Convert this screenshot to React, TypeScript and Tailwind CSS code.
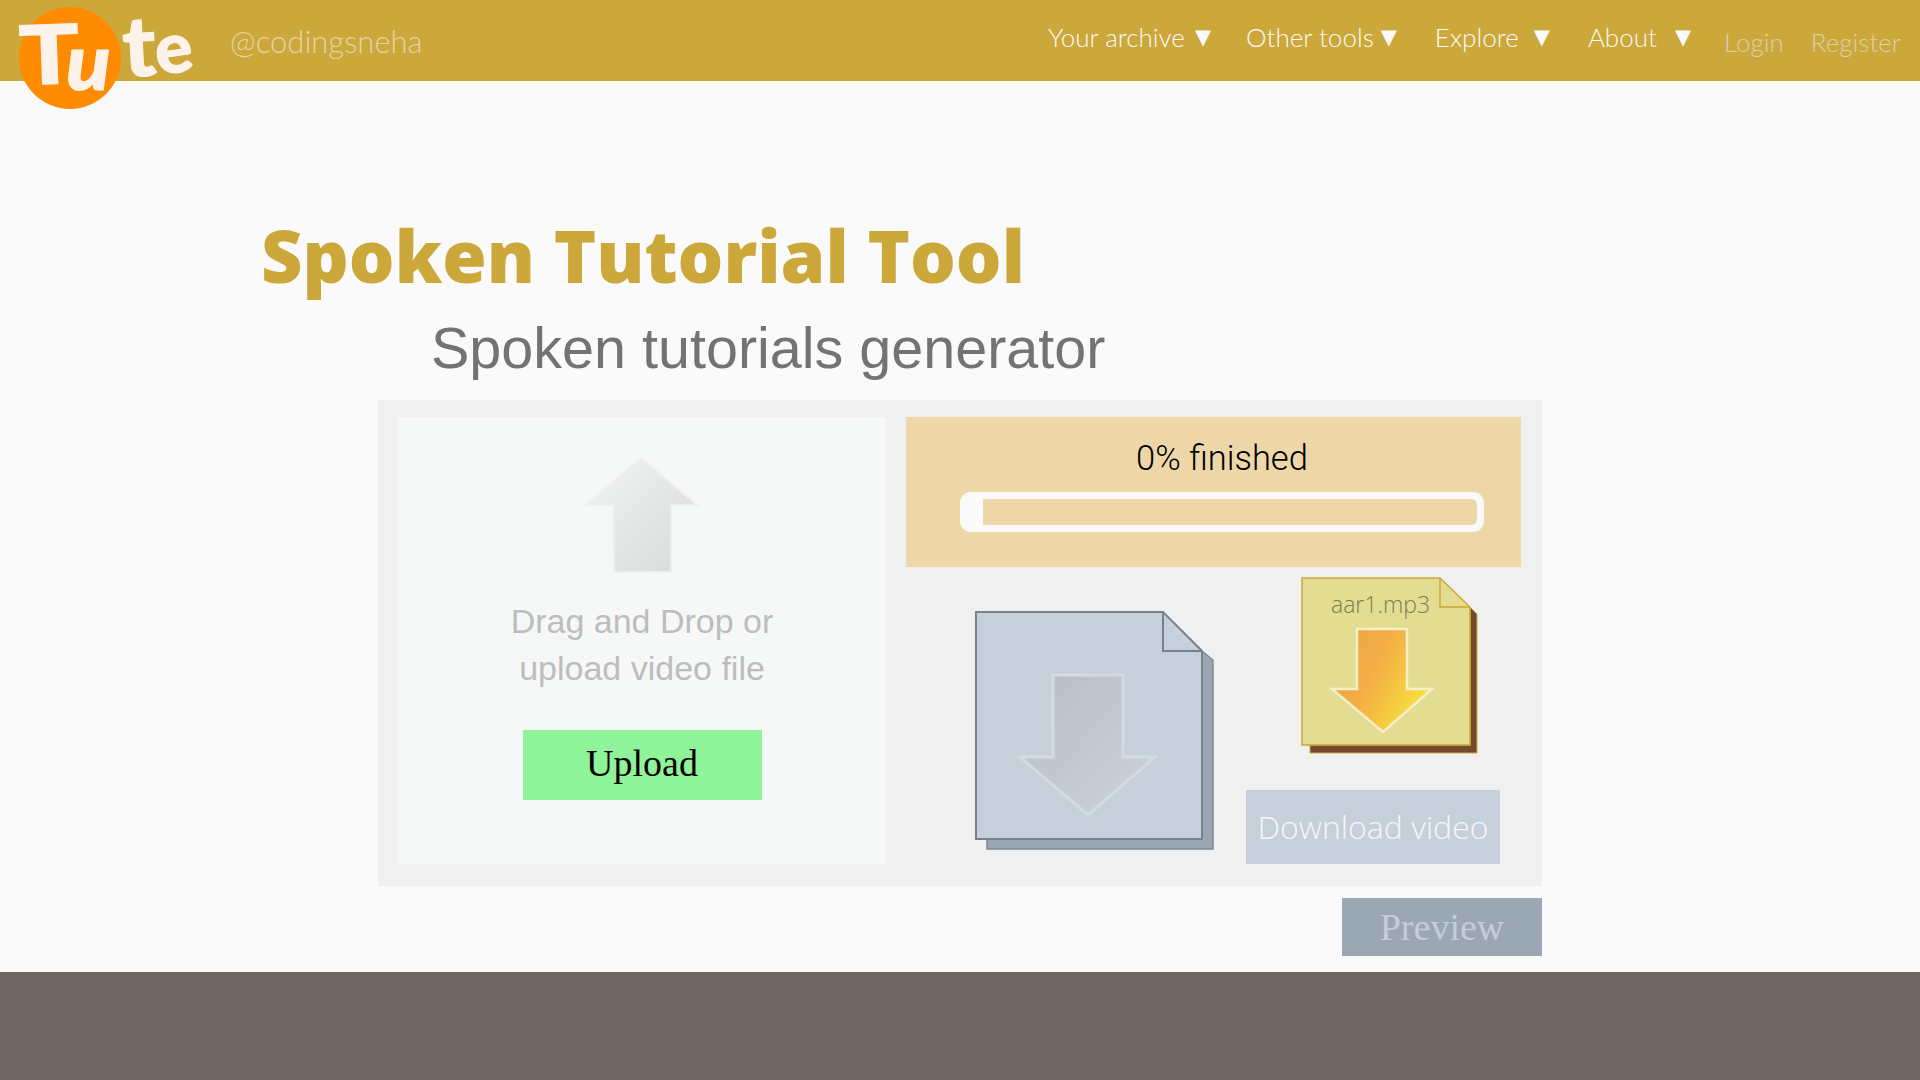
const navItems = [
  { label: "Your archive", cls: "ml-0", arrow: "ml-[10px]" },
  { label: "Other tools", cls: "ml-[35px]", arrow: "ml-[7px]" },
  { label: "Explore", cls: "ml-[38px]", arrow: "ml-[15px]" },
  { label: "About", cls: "ml-[38px]", arrow: "ml-[18px]" },
];

const Logo = () => (
  <svg width="210" height="120" viewBox="0 0 210 120" className="absolute left-0 top-0 overflow-visible">
    <circle cx="70" cy="58" r="51" fill="#ff8c00" />
    <g fill="#fdf3ea" stroke="#fdf3ea" strokeWidth="1" strokeLinejoin="round" fontFamily="Lato" fontWeight="900">
      <text x="0" y="0" fontSize="82" transform="translate(20 85) rotate(-2) scale(1.22 1)">T</text>
      <text x="0" y="0" fontSize="78" fontStyle="italic" transform="translate(66 90) scale(1.05 1)">u</text>
      <text x="0" y="0" fontSize="84" transform="translate(124 77) rotate(-3) scale(1.05 1)">t</text>
      <text x="0" y="0" fontSize="70" transform="translate(158 75) rotate(-8)">e</text>
    </g>
  </svg>
);

const UploadArrow = () => (
  <svg width="114" height="118" viewBox="0 0 114 118" className="block">
    <defs>
      <linearGradient id="upGrad" x1="0" y1="0" x2="1" y2="1">
        <stop offset="0" stopColor="#f2f3f3" />
        <stop offset="1" stopColor="#d8dada" />
      </linearGradient>
    </defs>
    <path d="M56 2 L112 49 H86 V116 H29 V49 H1 Z" fill="url(#upGrad)" stroke="#eeefef" strokeWidth="2" />
  </svg>
);

const BlueFile = () => (
  <svg width="240" height="240" viewBox="0 0 240 240" className="block">
    <defs>
      <linearGradient id="downGrad" x1="0" y1="0" x2="1" y2="1">
        <stop offset="0" stopColor="#b6bdc7" />
        <stop offset="1" stopColor="#ced3da" />
      </linearGradient>
    </defs>
    <path d="M227 40 L238 49 V238 H12 V228 H227 Z" fill="#9aa7b3" stroke="#7f8b95" strokeWidth="1.5" />
    <path d="M1 1 H188 L227 40 V228 H1 Z" fill="#c6d0da" stroke="#76838d" strokeWidth="2" />
    <path d="M188 1 V40 H227" fill="none" stroke="#76838d" strokeWidth="2" />
    <path d="M78 64 H148 V146 H180 L113 204 L45 146 H78 Z" fill="url(#downGrad)" stroke="#d3dbe2" strokeWidth="3" />
  </svg>
);

const YellowFile = () => (
  <svg width="178" height="178" viewBox="0 0 178 178" className="block">
    <defs>
      <linearGradient id="orangeGrad" x1="0" y1="0" x2="1" y2="0.5">
        <stop offset="0" stopColor="#e5a34a" />
        <stop offset="0.5" stopColor="#f4ae45" />
        <stop offset="1" stopColor="#f6e03c" />
      </linearGradient>
    </defs>
    <path d="M169 30 L176 37 V176 H9 V168 H169 Z" fill="#754a2c" stroke="#c9a74f" strokeWidth="1" />
    <path d="M1 1 H139 L169 30 V168 H1 Z" fill="#e3dd91" stroke="#cca739" strokeWidth="1.5" />
    <path d="M139 1 V30 H169" fill="none" stroke="#cca739" strokeWidth="1.5" />
    <path d="M56 52 H106 V112 H131 L82 155 L31 112 H56 Z" fill="url(#orangeGrad)" stroke="#f6efc9" strokeWidth="2.5" />
  </svg>
);

export default function App() {
  return (
    <div className="relative flex h-screen w-full flex-col overflow-hidden bg-[#fafafa]">
      {/* Header */}
      <header className="flex h-[81px] shrink-0 bg-[#cca739] pl-[230px] pr-[19px]">
        <span className="mt-[20px] font-['Lato',sans-serif] text-[31px] leading-[42px] font-light text-[#e6d3ab]">@codingsneha</span>
        <nav className="ml-auto flex">
          {navItems.map((item) => (
            <div key={item.label} className={`flex h-[75px] items-center ${item.cls}`}>
              <span className="font-['Lato',sans-serif] text-[26px] font-light text-[#fafafa]">{item.label}</span>
              <span className={`font-['DejaVu_Sans',sans-serif] text-[21px] text-[#fafafa] ${item.arrow}`}>▼</span>
            </div>
          ))}
          <div className="ml-[33px] flex h-[85px] items-center gap-[27px] font-['Lato',sans-serif] text-[26px] font-light text-[#dccfae]">
            <span>Login</span>
            <span>Register</span>
          </div>
        </nav>
      </header>
      <Logo />

      {/* Main */}
      <main className="flex-1 pl-[261px]">
        <h1 className="mt-[124px] font-['Open_Sans',sans-serif] text-[72px] leading-[100px] font-extrabold text-[#cca739]">Spoken Tutorial Tool</h1>
        <h2 className="mt-[12px] ml-[170px] font-['Liberation_Sans',sans-serif] text-[57.5px] leading-[62px] text-[#737373]">Spoken tutorials generator</h2>

        <div className="mt-[21px] ml-[117px] flex h-[486px] w-[1164px] bg-[#f0f0f0] pt-[17px] pl-[20px]">
          {/* Upload panel */}
          <div className="flex h-[447px] w-[488px] flex-col items-center bg-[#f6f8f8] pt-[39px]">
            <UploadArrow />
            <p className="mt-[24px] text-center font-['Liberation_Sans',sans-serif] text-[34px] leading-[47px] text-[#bdbdbd]">
              Drag and Drop or
              <br />
              upload video file
            </p>
            <button className="mt-[38px] h-[70px] w-[239px] bg-[#8ff399] pb-[3px] font-['Liberation_Serif',serif] text-[38px] text-black">Upload</button>
          </div>

          {/* Progress + files */}
          <div className="ml-[20px] w-[615px]">
            <div className="h-[150px] bg-[#edd6a8] pt-[22px] pl-[54px]">
              <p className="w-[524px] text-center font-['Roboto',sans-serif] text-[34.5px] leading-[38px] font-light text-black">0% finished</p>
              <div className="mt-[15px] flex h-[40px] w-[524px] justify-end rounded-[11px] bg-[#fafafa] pt-[7px] pr-[7px]">
                <div className="h-[26px] w-[494px] rounded-r-[6px] bg-[#edd6a8]" />
              </div>
            </div>
            <div className="flex">
              <div className="mt-[44px] ml-[69px]">
                <BlueFile />
              </div>
              <div className="ml-[86px] flex flex-col pt-[10px]">
                <div className="relative">
                  <YellowFile />
                  <span className="absolute left-[30px] top-[11px] font-['Open_Sans',sans-serif] text-[23px] leading-[32px] font-light text-[#7e7d50]">aar1.mp3</span>
                </div>
                <button className="mt-[35px] -ml-[55px] h-[74px] w-[254px] bg-[#c6d0da] font-['Open_Sans',sans-serif] text-[32px] font-light text-[#f4f6f8]">Download video</button>
              </div>
            </div>
          </div>
        </div>

        <div className="mt-[12px] ml-[117px] flex w-[1164px] justify-end">
          <button className="h-[58px] w-[200px] bg-[#9ba8b4] font-['Liberation_Serif',serif] text-[38px] text-[#c3ced8]">Preview</button>
        </div>
      </main>

      {/* Footer */}
      <footer className="h-[108px] shrink-0 bg-[#706762]" />
    </div>
  );
}
